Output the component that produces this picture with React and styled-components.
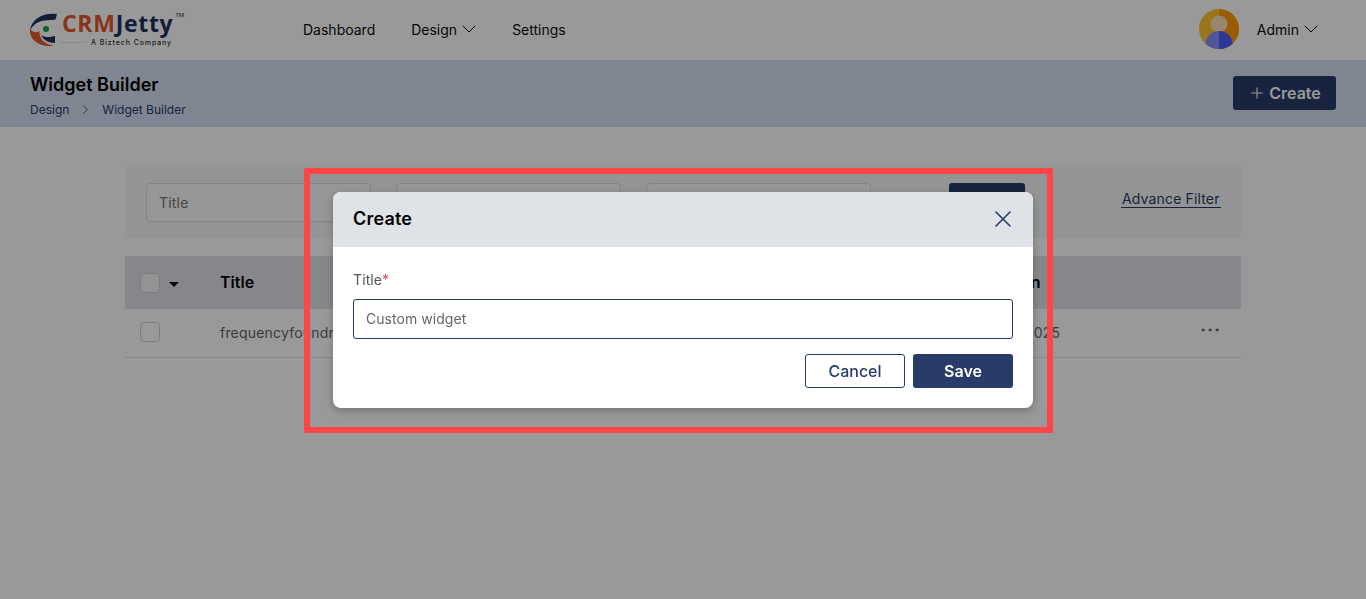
import React from 'react';
import styled, { createGlobalStyle } from 'styled-components';
import { ChevronDown, ChevronRight, Plus, X, Ellipsis } from 'lucide-react';

const GlobalStyle = createGlobalStyle`
  html, body {
    margin: 0;
    padding: 0;
    background: #fff;
    font-family: Inter, "Liberation Sans", sans-serif;
    color: #000;
  }
  * { box-sizing: border-box; }
`;

const Page = styled.div`
  width: 100%;
  height: 599px;
  overflow: hidden;
`;

const TopBar = styled.header`
  height: 60px;
  display: flex;
  align-items: center;
  padding: 0 48px 2px 30px;
  background: #fff;
`;

const Logo = styled.div`
  width: 273px;
  display: flex;
  gap: 4px;
  align-items: flex-start;
  align-self: flex-start;
  flex-shrink: 0;
  margin-top: 13px;
`;

const LogoText = styled.div`
  position: relative;
  display: flex;
  flex-direction: column;
  margin-top: -1px;
  font-family: "Open Sans", sans-serif;
`;

const LogoName = styled.div`
  font-size: 23px;
  font-weight: 700;
  line-height: 22px;
  letter-spacing: 0.7px;
  color: #1f3160;
  white-space: nowrap;
  & > span { color: #e3592a; }
`;

const LogoTm = styled.span`
  position: absolute;
  top: 0;
  right: -11px;
  font-size: 6px;
  line-height: 7px;
  font-weight: 600;
  color: #555;
`;

const LogoTag = styled.div`
  position: relative;
  margin: 4px 0 0 29px;
  font-family: Inter, sans-serif;
  font-size: 7px;
  font-weight: 500;
  line-height: 9px;
  letter-spacing: 0.9px;
  color: #333;
  white-space: nowrap;
  &::before {
    content: '';
    position: absolute;
    left: -31px;
    top: 4px;
    width: 26px;
    height: 1px;
    background: #e4e4e4;
  }
`;

const Nav = styled.nav`
  display: flex;
  align-items: center;
  gap: 36px;
  flex: 1;
`;

const NavItem = styled.a`
  display: flex;
  align-items: center;
  font-size: 14px;
  color: #0d0d0d;
  & > svg { margin-right: -5px; }
`;

const User = styled.div`
  display: flex;
  align-items: center;
  gap: 18px;
  font-size: 14px;
`;

const Avatar = styled.svg`
  width: 40px;
  height: 40px;
  display: block;
`;

const Band = styled.section`
  height: 67px;
  display: flex;
  align-items: center;
  justify-content: space-between;
  padding: 0 30px 1px;
  background: #d5def3;
`;

const PageTitle = styled.h1`
  margin: 4px 0 5px;
  font-size: 18px;
  line-height: 24px;
  font-weight: 600;
`;

const Crumbs = styled.div`
  display: flex;
  align-items: center;
  gap: 9px;
  font-size: 12px;
  line-height: 16px;
  color: #283b69;
`;

const PrimaryButton = styled.button`
  display: flex;
  align-items: center;
  justify-content: center;
  gap: 3px;
  flex-shrink: 0;
  width: ${(p) => p.$width}px;
  height: ${(p) => p.$height}px;
  border: 0;
  border-radius: 3px;
  background: #283b69;
  color: #fff;
  font: 600 16px Inter, sans-serif;
`;

const Content = styled.main`
  padding: 40px 125px 0;
`;

const FilterBar = styled.div`
  height: 71px;
  display: flex;
  padding: 16px 21px;
  background: #f7f7f7;
`;

const FilterInput = styled.div`
  width: 225px;
  height: 39px;
  flex-shrink: 0;
  margin-right: 25px;
  padding-left: 12px;
  display: flex;
  align-items: center;
  border: 1px solid #dcdde3;
  border-radius: 4px;
  background: #fafafa;
  font-size: 14px;
  letter-spacing: 0.2px;
  color: #757575;
`;

const SearchButton = styled(PrimaryButton)`
  margin-left: 53px;
`;

const AdvanceFilter = styled.a`
  margin: 8px 0 0 96px;
  height: 17px;
  padding: 0 1px;
  border-bottom: 1px solid #283b69;
  font-size: 14px;
  line-height: 16px;
  letter-spacing: 0.15px;
  color: #283b69;
  white-space: nowrap;
`;

const Table = styled.div`
  margin-top: 18px;
`;

const Row = styled.div`
  display: grid;
  grid-template-columns: 95px 735px 1fr 40px;
  align-items: center;
  height: ${(p) => p.$height}px;
  padding-bottom: ${(p) => p.$head ? '0' : '2px'};
  background: ${(p) => p.$head ? '#e0e2e8' : '#fff'};
  border-bottom: ${(p) => p.$head ? '0' : '1px solid #e4e5ea'};
`;

const CheckCell = styled.div`
  display: flex;
  align-items: center;
  gap: 9px;
  padding-left: 15px;
`;

const Checkbox = styled.span`
  width: 20px;
  height: 20px;
  border: 1px solid #cfd0d6;
  border-radius: 4px;
  background: ${(p) => p.$head ? '#f5f5f5' : '#fff'};
`;

const Caret = styled.span`
  width: 0;
  height: 0;
  margin-top: 3px;
  border-left: 5px solid transparent;
  border-right: 5px solid transparent;
  border-top: 5px solid #111;
`;

const HeadCell = styled.div`
  margin-top: -2px;
  font-size: 16px;
  letter-spacing: 0.05px;
  font-weight: 600;
  white-space: nowrap;
`;

const Cell = styled.div`
  font-size: 14px;
  letter-spacing: 0.2px;
  color: #666;
  white-space: nowrap;
`;

const DotsCell = styled.div`
  display: flex;
  color: #444;
  margin: -5px 0 0 -3px;
`;

const Overlay = styled.div`
  position: fixed;
  inset: 0;
  background: rgba(0, 0, 0, 0.4);
`;

const Frame = styled.div`
  position: absolute;
  left: 304px;
  top: 168px;
  width: 749px;
  height: 265px;
  padding: 18px 14px 19px 23px;
  border: 6px solid #ff4545;
`;

const Modal = styled.div`
  width: 700px;
  height: 216px;
  border-radius: 8px;
  background: #fff;
  overflow: hidden;
  box-shadow: 0 3px 8px rgba(0, 0, 0, 0.25);
`;

const ModalHead = styled.div`
  height: 55px;
  display: flex;
  align-items: center;
  justify-content: space-between;
  padding: 0 16px 0 20px;
  background: #dfe2e7;
  color: #283b69;
  & > svg { margin-top: -2px; }
`;

const ModalTitle = styled.h2`
  margin: -2px 0 0;
  font-size: 18px;
  letter-spacing: 0.2px;
  font-weight: 600;
  color: #000;
`;

const ModalBody = styled.div`
  padding: 23px 20px 0;
`;

const Label = styled.label`
  display: block;
  margin-bottom: 9px;
  font-size: 14px;
  line-height: 20px;
  letter-spacing: 0.1px;
  color: #555;
  & > span { color: #e5484d; }
`;

const TextInput = styled.div`
  height: 40px;
  display: flex;
  align-items: center;
  padding: 0 0 1px 12px;
  border: 1px solid #283b69;
  border-radius: 3px;
  font-size: 14px;
  letter-spacing: 0.05px;
  color: #666;
`;

const Actions = styled.div`
  display: flex;
  justify-content: flex-end;
  gap: 8px;
  margin-top: 15px;
`;

const CancelButton = styled(PrimaryButton)`
  border: 1px solid #283b69;
  background: #fff;
  color: #283b69;
  font-weight: 500;
`;

const LogoMark = () => (
  <svg width="28" height="34" viewBox="0 0 28 34" style={{ flexShrink: 0 }}>
    <path d="M27 1 C13 -1 1 6 0 18 C3 11 9 8 15 7.5 C19 7 24 7 25.5 6.5Z" fill="#1f3160" />
    <path d="M0 16 C-1 27 9 34 24 33 C14 31 9 26 9.5 18 C7 20 3 20 0 16Z" fill="#e3592a" />
    <path d="M11 22 C15 25 21 24 25 23 L25 30 C19 30 13 27 11 22Z" fill="#1f3160" />
    <circle cx="16" cy="16" r="3" fill="#1fa04a" />
  </svg>
);

const AvatarIcon = () => (
  <Avatar viewBox="0 0 40 40">
    <defs>
      <clipPath id="disc"><circle cx="20" cy="20" r="20" /></clipPath>
    </defs>
    <g clipPath="url(#disc)">
      <rect width="20" height="40" fill="#ffc433" />
      <rect x="20" width="20" height="40" fill="#ff9900" />
      <circle cx="20" cy="15" r="8.5" fill="#ffe0b5" />
      <ellipse cx="20" cy="35" rx="13.5" ry="13" fill="#8890ff" />
      <path d="M20 22 a13.5 13 0 0 1 13.5 13 V40 H20Z" fill="#4a5cf5" />
    </g>
  </Avatar>
);

export default function App() {
  return (
    <Page>
      <GlobalStyle />
      <TopBar>
        <Logo>
          <LogoMark />
          <LogoText>
            <LogoName><span>CRM</span>Jetty</LogoName>
            <LogoTm>TM</LogoTm>
            <LogoTag>A Biztech Company</LogoTag>
          </LogoText>
        </Logo>
        <Nav>
          <NavItem>Dashboard</NavItem>
          <NavItem>Design <ChevronDown size={24} strokeWidth={1} /></NavItem>
          <NavItem>Settings</NavItem>
        </Nav>
        <User>
          <AvatarIcon />
          <NavItem>Admin <ChevronDown size={24} strokeWidth={1} /></NavItem>
        </User>
      </TopBar>
      <Band>
        <div>
          <PageTitle>Widget Builder</PageTitle>
          <Crumbs>
            Design
            <ChevronRight size={15} strokeWidth={1.25} />
            <span>Widget Builder</span>
          </Crumbs>
        </div>
        <PrimaryButton $width={103} $height={34}>
          <Plus size={18} strokeWidth={1.5} /> Create
        </PrimaryButton>
      </Band>
      <Content>
        <FilterBar>
          <FilterInput>Title</FilterInput>
          <FilterInput />
          <FilterInput />
          <SearchButton $width={76} $height={39}>Search</SearchButton>
          <AdvanceFilter>Advance Filter</AdvanceFilter>
        </FilterBar>
        <Table>
          <Row $head $height={53}>
            <CheckCell><Checkbox $head /><Caret /></CheckCell>
            <HeadCell>Title</HeadCell>
            <HeadCell>Created on</HeadCell>
            <span />
          </Row>
          <Row $height={49}>
            <CheckCell><Checkbox /></CheckCell>
            <Cell>frequencyfoundry</Cell>
            <Cell>12 March, 2025</Cell>
            <DotsCell><Ellipsis size={24} strokeWidth={1} /></DotsCell>
          </Row>
        </Table>
      </Content>
      <Overlay>
        <Frame>
          <Modal>
            <ModalHead>
              <ModalTitle>Create</ModalTitle>
              <X size={28} strokeWidth={1.4} />
            </ModalHead>
            <ModalBody>
              <Label>Title<span>*</span></Label>
              <TextInput>Custom widget</TextInput>
              <Actions>
                <CancelButton $width={100} $height={34}>Cancel</CancelButton>
                <PrimaryButton $width={100} $height={34}>Save</PrimaryButton>
              </Actions>
            </ModalBody>
          </Modal>
        </Frame>
      </Overlay>
    </Page>
  );
}
